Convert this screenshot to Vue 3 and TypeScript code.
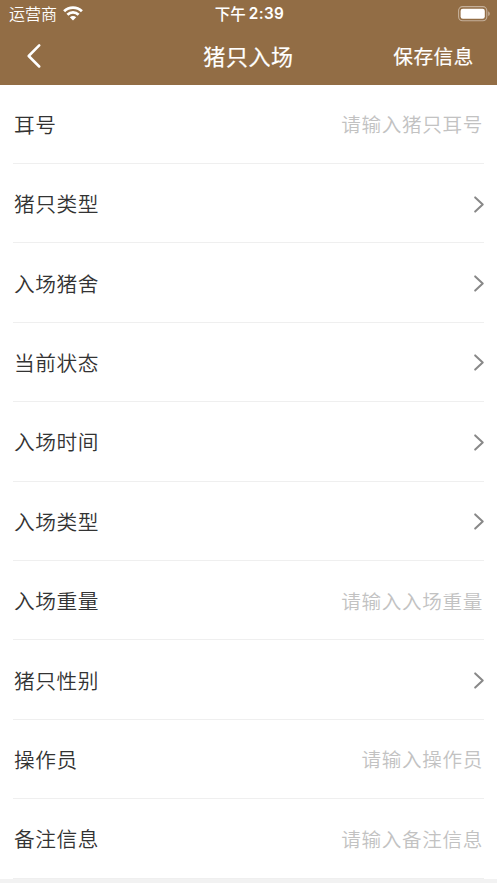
<script setup lang="ts">
interface Field {
  label: string
  placeholder?: string
}

const fields: Field[] = [
  { label: '耳号', placeholder: '请输入猪只耳号' },
  { label: '猪只类型' },
  { label: '入场猪舍' },
  { label: '当前状态' },
  { label: '入场时间' },
  { label: '入场类型' },
  { label: '入场重量', placeholder: '请输入入场重量' },
  { label: '猪只性别' },
  { label: '操作员', placeholder: '请输入操作员' },
  { label: '备注信息', placeholder: '请输入备注信息' },
]
</script>

<template>
  <div class="screen">
    <header class="header">
      <div class="status">
        <div class="carrier">
          <span>运营商</span>
          <svg class="wifi" width="20" height="15" viewBox="0 0 20 15" fill="none" stroke="#fff" stroke-width="2.8">
            <path d="M1.1 5.3C6.1.5 13.9.5 18.9 5.3" />
            <path d="M4.4 8.7c3.2-3.1 8-3.1 11.2 0" />
            <path d="M10 14.4 6.8 11.3c1.8-1.7 4.6-1.7 6.4 0z" fill="#fff" stroke="none" />
          </svg>
        </div>
        <div class="time"><span>下午</span><span class="clock">2:39</span></div>
        <div class="power">
          <svg width="32" height="16" viewBox="0 0 32 16">
            <rect x=".6" y=".6" width="28.2" height="14.2" rx="4" fill="none" stroke="#c5b09a" stroke-width="1.1" />
            <rect x="2.6" y="2.7" width="24.2" height="10.1" rx="2.2" fill="#fff" />
            <path d="M30.2 5.3q1.6.8 1.6 2.4t-1.6 2.4z" fill="#c5b09a" />
          </svg>
        </div>
      </div>
      <nav class="nav">
        <svg class="back" width="14" height="24" viewBox="0 0 14 24" fill="none" stroke="#fff" stroke-width="2.5" stroke-linecap="round" stroke-linejoin="round">
          <path d="M12.2 1.4 1.7 12l10.5 10.5" />
        </svg>
        <h1 class="title">猪只入场</h1>
        <div class="save">保存信息</div>
      </nav>
    </header>
    <main class="form">
      <div v-for="field in fields" :key="field.label" class="row">
        <span class="label">{{ field.label }}</span>
        <span v-if="field.placeholder" class="placeholder">{{ field.placeholder }}</span>
        <svg v-else class="arrow" width="10" height="17" viewBox="0 0 10 17" fill="none" stroke="#888" stroke-width="2" stroke-linecap="round" stroke-linejoin="round">
          <path d="m1.2 1.4 7.5 7.1-7.5 7.1" />
        </svg>
      </div>
    </main>
  </div>
</template>

<style>
body {
  margin: 0;
  overflow: hidden;
  background: #f2f2f2;
}
</style>

<style scoped>
.screen {
  height: 883px;
  overflow: hidden;
  font-family: "Noto Sans CJK SC", sans-serif;
  background: #f2f2f2;
}
.header {
  height: 84.6px;
  color: #fff;
  background: #926d45;
}
.status {
  display: grid;
  grid-template-columns: 1fr auto 1fr;
  align-items: center;
  height: 27px;
  padding: 0 7px 0 9px;
  box-sizing: border-box;
}
.carrier {
  display: flex;
  align-items: center;
  gap: 6px;
  font-size: 16px;
  font-weight: 350;
  line-height: 27px;
}
.time {
  display: flex;
  align-items: center;
  gap: 3px;
  font-size: 15.5px;
  font-weight: 500;
  line-height: 27px;
}
.clock {
  font-family: Inter, sans-serif;
  font-weight: 600;
  font-size: 15.3px;
  letter-spacing: 0.4px;
}
.power {
  display: flex;
  justify-content: flex-end;
}
.nav {
  display: grid;
  grid-template-columns: 1fr auto 1fr;
  align-items: center;
  height: 57.6px;
  padding: 0 23px 0 27px;
}
.title {
  margin: 0 4px 2px 0;
  font-size: 22px;
  letter-spacing: 0.6px;
  font-weight: 400;
  line-height: 54px;
  -webkit-text-stroke: 0.2px #fff;
}
.save {
  justify-self: end;
  font-size: 19.6px;
  letter-spacing: 0.6px;
  font-weight: 400;
  line-height: 57px;
  -webkit-text-stroke: 0.2px #fff;
}
.form {
  height: 794px;
  background: #fff;
}
.row {
  display: flex;
  align-items: center;
  justify-content: space-between;
  height: 79.4px;
  margin: 0 13px;
  box-sizing: border-box;
  border-bottom: 1px solid #efefef;
}
.label {
  padding-left: 1px;
  font-size: 20.7px;
  letter-spacing: 0.6px;
  font-weight: 350;
  line-height: 28px;
  color: #333;
}
.placeholder {
  padding-right: 1px;
  font-size: 19.6px;
  letter-spacing: 0.65px;
  font-weight: 350;
  color: #c2c2c2;
}
.arrow {
  margin-top: 2px;
}
</style>
